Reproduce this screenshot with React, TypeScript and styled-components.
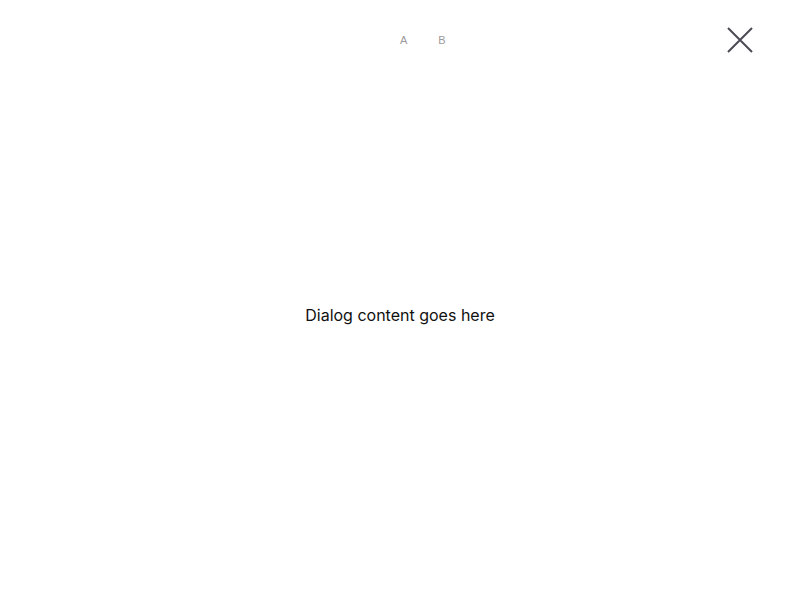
import React from "react";
import styled, { createGlobalStyle } from "styled-components";

const Global = createGlobalStyle`
  html, body { margin: 0; padding: 0; background: #ffffff; }
  body { font-family: Inter, "Noto Sans", sans-serif; }
`;

const Page = styled.div`
  width: 800px;
  height: 600px;
  display: flex;
  flex-direction: column;
  background: #ffffff;
`;

const Header = styled.div`
  height: 80px;
  display: flex;
  align-items: center;
  padding-left: 400px;
  padding-right: 44px;
  box-sizing: border-box;
`;

const Tabs = styled.div`
  display: flex;
  align-items: center;
  gap: 31px;
  flex: 1;
`;

const Tab = styled.span`
  font-family: "Liberation Sans", Arial, sans-serif;
  font-size: 11px;
  color: #9a9a9a;
  line-height: 1;
`;

const CloseButton = styled.button`
  width: 32px;
  height: 32px;
  padding: 0;
  border: none;
  background: transparent;
  display: flex;
  align-items: center;
  justify-content: center;
  cursor: pointer;
  color: #4a4a54;
`;

const Body = styled.div`
  flex: 1;
  display: flex;
  align-items: center;
  justify-content: center;
  padding-bottom: 50px;
`;

const Message = styled.p`
  margin: 0;
  font-family: Inter, "Noto Sans", sans-serif;
  font-size: 16px;
  color: #111111;
`;

export default function App() {
  return (
    <>
      <Global />
      <Page>
        <Header>
          <Tabs>
            <Tab>A</Tab>
            <Tab>B</Tab>
          </Tabs>
          <CloseButton aria-label="Close">
            <svg width="32" height="32" viewBox="0 0 32 32" fill="none">
              <path d="M4 4L28 28M28 4L4 28" stroke="currentColor" strokeWidth="2" />
            </svg>
          </CloseButton>
        </Header>
        <Body>
          <Message>Dialog content goes here</Message>
        </Body>
      </Page>
    </>
  );
}
